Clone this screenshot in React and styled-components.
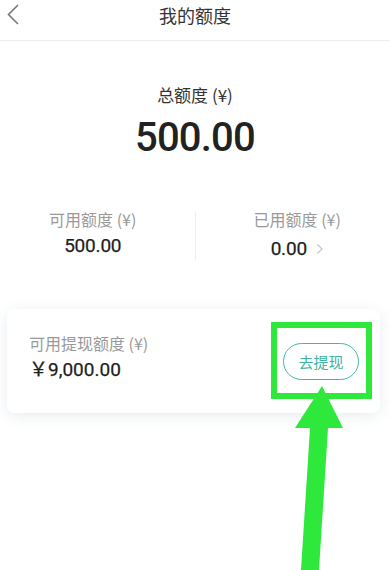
import React from "react";
import styled, { createGlobalStyle } from "styled-components";

const Global = createGlobalStyle`
  html, body { margin: 0; padding: 0; background: #fff; }
  body { font-family: "Roboto", "Noto Sans CJK SC", sans-serif; -webkit-font-smoothing: antialiased; }
  * { box-sizing: border-box; }
`;

const Page = styled.div`
  position: relative;
  width: 390px;
  height: 570px;
  overflow: hidden;
  background: #fff;
`;

const Header = styled.header`
  position: relative;
  height: 41px;
  border-bottom: 1px solid #eeeeee;
  display: flex;
  justify-content: center;
  align-items: flex-start;
  padding-top: 3px;
`;

const BackButton = styled.button`
  position: absolute;
  left: 0;
  top: 0;
  width: 24px;
  height: 28px;
  padding: 0;
  border: none;
  background: none;
  display: flex;
  align-items: center;
  justify-content: center;
`;

const Title = styled.h1`
  margin: 0;
  font-family: "Noto Sans CJK SC", sans-serif;
  font-size: 18px;
  font-weight: 400;
  line-height: 24px;
  color: #333;
`;

const Summary = styled.section`
  display: flex;
  flex-direction: column;
  align-items: center;
  padding-top: 43px;
`;

const SummaryLabel = styled.div`
  font-family: "Noto Sans CJK SC", sans-serif;
  font-size: 17px;
  line-height: 22px;
  color: #333;
`;

const BigNumber = styled.div`
  margin-top: 8px;
  font-family: "Roboto", sans-serif;
  font-size: 40px;
  font-weight: 500;
  line-height: 48px;
  letter-spacing: -0.8px;
  color: #222;
`;

const Stats = styled.div`
  display: flex;
  margin-top: 47px;
  position: relative;
`;

const StatCol = styled.div`
  flex: 1;
  display: flex;
  flex-direction: column;
  align-items: center;
  padding-left: ${(p) => (p.$right ? "9px" : "0")};
  padding-right: ${(p) => (p.$right ? "0" : "9px")};
`;

const Divider = styled.div`
  width: 1px;
  margin-top: 3px;
  height: 48px;
  background: #eeeeee;
`;

const StatLabel = styled.div`
  font-family: "Noto Sans CJK SC", sans-serif;
  font-size: 16px;
  line-height: 20px;
  color: #999;
`;

const StatValue = styled.div`
  display: flex;
  align-items: center;
  gap: 9px;
  margin-top: ${(p) => (p.$low ? "8px" : "5px")};
  font-family: "Roboto", sans-serif;
  font-size: 19px;
  font-weight: 400;
  line-height: 24px;
  color: #1e1e1e;
  letter-spacing: -0.2px;
  -webkit-text-stroke: 0.25px #1e1e1e;
`;

const Card = styled.div`
  margin: 48px 10px 0 7px;
  height: 104px;
  border-radius: 8px;
  background: #fff;
  box-shadow: 0 3px 14px rgba(110, 140, 165, 0.16);
  display: flex;
  align-items: center;
  justify-content: space-between;
  padding: 0 21px 0 22px;
`;

const CardInfo = styled.div`
  display: flex;
  flex-direction: column;
  gap: 4px;
  margin-top: -6px;
`;

const CardLabel = styled.div`
  font-family: "Noto Sans CJK SC", sans-serif;
  font-size: 16px;
  line-height: 20px;
  color: #999;
`;

const CardValue = styled.div`
  font-family: "Roboto", "Noto Sans CJK SC", sans-serif;
  font-size: 19px;
  font-weight: 400;
  line-height: 26px;
  color: #1e1e1e;
  -webkit-text-stroke: 0.25px #1e1e1e;
`;

const WithdrawButton = styled.button`
  width: 76px;
  height: 37px;
  border-radius: 19px;
  border: 1px solid #3fb9aa;
  background: #fff;
  color: #3fb1a3;
  font-family: "Noto Sans CJK SC", sans-serif;
  font-size: 15px;
  padding: 0;
`;

const Highlight = styled.div`
  position: absolute;
  left: 271px;
  top: 322px;
  width: 101px;
  height: 77px;
  border: 6px solid #2ee83b;
  pointer-events: none;
`;

const ArrowSvg = styled.svg`
  position: absolute;
  left: 0;
  top: 0;
  pointer-events: none;
`;

export default function App() {
  return (
    <>
      <Global />
      <Page>
        <Header>
          <BackButton aria-label="back">
            <svg width="16" height="26" viewBox="0 0 16 26">
              <polyline points="14,4 4.5,13.5 14,23" fill="none" stroke="#777" strokeWidth="1.6" />
            </svg>
          </BackButton>
          <Title>我的额度</Title>
        </Header>
        <Summary>
          <SummaryLabel>总额度 (¥)</SummaryLabel>
          <BigNumber>500.00</BigNumber>
        </Summary>
        <Stats>
          <StatCol>
            <StatLabel>可用额度 (¥)</StatLabel>
            <StatValue>500.00</StatValue>
          </StatCol>
          <Divider />
          <StatCol $right>
            <StatLabel>已用额度 (¥)</StatLabel>
            <StatValue $low>
              0.00
              <svg width="8" height="12" viewBox="0 0 8 12">
                <polyline points="1.5,1.5 6,6 1.5,10.5" fill="none" stroke="#c4c4c4" strokeWidth="1.2" />
              </svg>
            </StatValue>
          </StatCol>
        </Stats>
        <Card>
          <CardInfo>
            <CardLabel>可用提现额度 (¥)</CardLabel>
            <CardValue>￥9,000.00</CardValue>
          </CardInfo>
          <WithdrawButton>去提现</WithdrawButton>
        </Card>
        <Highlight />
        <ArrowSvg width="390" height="570" viewBox="0 0 390 570">
          <polygon
            points="322,386 343,428 328,428 319,570 301,570 310,428 295,428"
            fill="#2ee83b"
          />
        </ArrowSvg>
      </Page>
    </>
  );
}
